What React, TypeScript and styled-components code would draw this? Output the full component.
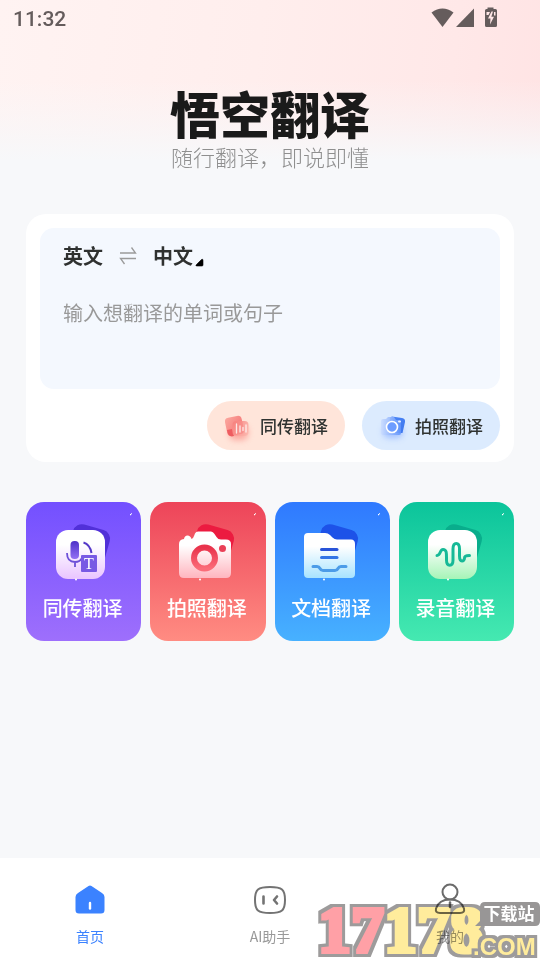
import React from "react";
import styled, { createGlobalStyle } from "styled-components";

const GlobalStyle = createGlobalStyle`
  *, *::before, *::after { box-sizing: border-box; }
  body { margin: 0; background: #f7f8fa; }
  body, button, textarea { font-family: "Noto Sans CJK SC", sans-serif; }
  button { border: 0; padding: 0; background: none; cursor: pointer; }
  svg { display: block; flex: none; overflow: visible; }
`;

const Page = styled.div`
  position: relative;
  min-height: 100vh;
  display: flex;
  flex-direction: column;
  background:
    linear-gradient(to bottom, rgba(247, 248, 250, 0) 0, rgba(247, 248, 250, 0) 80px, rgba(247, 248, 250, 0.5) 124px, #f7f8fa 160px),
    linear-gradient(97deg, #fff3f2 0%, #ffeeed 40%, #ffe8e8 70%, #ffdfe0 100%);
`;

const StatusBar = styled.header`
  display: flex;
  align-items: center;
  justify-content: space-between;
  height: 38px;
  padding: 0 41px 0 13px;
  color: #655c5c;
`;

const Clock = styled.time`
  font: 500 21px/24px Roboto, sans-serif;
`;

const Hero = styled.div`
  display: flex;
  flex-direction: column;
  align-items: center;
  padding-top: 48px;
`;

const Title = styled.h1`
  margin: 0;
  color: #1a1a1a;
  font-size: 50px;
  font-weight: 900;
  line-height: 52px;
`;

const Tagline = styled.p`
  margin: 4px 0 0;
  color: #8f8f8f;
  font-size: 22px;
  font-weight: 300;
  line-height: 28px;
`;

const Main = styled.main`
  flex: 1;
  padding: 44px 26px 24px;
`;

const Card = styled.section`
  padding: 14px 14px 12px;
  border-radius: 20px;
  background: #fff;
`;

const InputPanel = styled.div`
  padding: 14px 23px 12px;
  border-radius: 14px;
  background: #f4f8fe;
`;

const LanguageRow = styled.div`
  display: flex;
  align-items: center;
  height: 28px;
  gap: 16px;
`;

const Language = styled.button`
  display: flex;
  align-items: center;
  gap: 3px;
  color: #2f3130;
  font-size: 20px;
  font-weight: 700;
  line-height: 28px;
`;

const SourceText = styled.textarea`
  display: block;
  width: 100%;
  height: 78px;
  margin-top: 29px;
  padding: 0;
  border: 0;
  outline: 0;
  resize: none;
  background: none;
  color: #333;
  font-size: 20px;
  line-height: 28px;
  &::placeholder { color: #999; opacity: 1; }
`;

const Actions = styled.div`
  display: flex;
  justify-content: flex-end;
  gap: 17px;
  margin-top: 12px;
`;

const Pill = styled.button<{ $tint: string }>`
  display: flex;
  align-items: center;
  gap: 4px;
  height: 49px;
  padding: 0 17px 0 12px;
  border-radius: 25px;
  background: ${(p) => p.$tint};
  color: #303331;
  font-size: 17px;
  font-weight: 500;
`;

const Tiles = styled.nav`
  display: grid;
  grid-template-columns: repeat(4, 1fr);
  gap: 9px;
  margin-top: 40px;
`;

const Tile = styled.a<{ $from: string; $to: string }>`
  display: flex;
  flex-direction: column;
  align-items: center;
  gap: 12px;
  padding: 20px 2px 19px 0;
  border-radius: 18px;
  background: linear-gradient(${(p) => p.$from}, ${(p) => p.$to});
  color: #fff;
  font-size: 20px;
  font-weight: 500;
  line-height: 28px;
  text-decoration: none;
`;

const TabBar = styled.nav`
  display: grid;
  grid-template-columns: repeat(3, 1fr);
  height: 102px;
  padding-top: 26px;
  background: #fff;
`;

const Tab = styled.a<{ $active?: boolean }>`
  display: flex;
  flex-direction: column;
  align-items: center;
  gap: 10px;
  color: ${(p) => (p.$active ? "#3b82ff" : "#999")};
  font-size: 14px;
  line-height: 20px;
  text-decoration: none;
`;

const Watermark = styled.div`
  position: absolute;
  right: 0;
  bottom: 0;
  pointer-events: none;
  mix-blend-mode: multiply;
`;

const StatusIcons = () => (
  <svg width="68" height="20" viewBox="0 0 68 20" fill="currentColor" aria-hidden="true">
    <path d="M0.5 3.500Q11.5-4.500 22.5 3.500L11.5 18Z" />
    <path d="M43-.5V18H25Z" />
    <path fillRule="evenodd" d="M56.500 0V-1.500H62.500V0H64.500Q66 0 66 1.500V16.500Q66 18 64.500 18H55.500Q54 18 54 16.500V1.500Q54 0 55.500 0ZM60.500 2.500L57 9.500H59.500L59 15.500L63 7.800H60.300L62 2.500ZM55.500 3H59L57.500 6H55.500ZM63 3H64.500V6.500H63Z" />
  </svg>
);

const SwapIcon = () => (
  <svg width="18" height="18" viewBox="0 0 18 18" fill="none" stroke="#9a9a9a" strokeWidth="1.300" aria-hidden="true">
    <path d="M1 6H16.500L12.500 .5M17 11.500H1.500L5.500 17" />
  </svg>
);

const CornerMark = () => (
  <svg width="7" height="20" viewBox="0 0 7 20" aria-hidden="true">
    <path d="M7 14.500V19Q7 20 6 20H1Q-1 20 .5 18.500L5.500 13.500Q7 12.500 7 14.500Z" fill="#000" stroke="#000" strokeWidth=".6" />
  </svg>
);

const InterpretMini = () => (
  <svg width="37" height="38" viewBox="0 0 37 38" aria-hidden="true">
    <defs>
      <linearGradient id="mr" x1="0" y1="0" x2="1" y2="1"><stop stopColor="#fba9a0" /><stop offset="1" stopColor="#f46a6c" /></linearGradient>
      <linearGradient id="mrf" x1="0" y1="0" x2="1" y2="1"><stop stopColor="#f77f7c" /><stop offset="1" stopColor="#fbb0a8" stopOpacity=".5" /></linearGradient>
      <filter id="blurR" x="-50%" y="-50%" width="200%" height="200%"><feGaussianBlur stdDeviation="3" /></filter>
    </defs>
    <rect x="10" y="18" width="19" height="15" rx="6" fill="#f98780" opacity=".65" filter="url(#blurR)" />
    <rect x="7" y="9.500" width="17" height="18.500" rx="4" fill="url(#mr)" transform="rotate(-12 16 19)" />
    <path d="M8 23L13 22L15 29Q9 31 8 23Z" fill="#ee5c60" />
    <rect x="13.500" y="14" width="16" height="15" rx="4" fill="url(#mrf)" />
    <path d="M17.500 17V26M21 19V25M24 20.500V23.500M27 18V25" stroke="#fff" strokeOpacity=".8" strokeWidth="1.300" strokeLinecap="round" />
  </svg>
);

const CameraMini = () => (
  <svg width="37" height="38" viewBox="0 0 37 38" aria-hidden="true">
    <defs>
      <linearGradient id="mb" x1="0" y1="0" x2="1" y2="1"><stop stopColor="#4b86f7" /><stop offset="1" stopColor="#3e77ed" /></linearGradient>
      <linearGradient id="mc" x1="0" y1="0" x2="1" y2="0"><stop stopColor="#cadcff" /><stop offset="1" stopColor="#5f92fb" /></linearGradient>
      <filter id="blurB" x="-50%" y="-50%" width="200%" height="200%"><feGaussianBlur stdDeviation="3" /></filter>
    </defs>
    <rect x="9" y="18" width="20" height="13" rx="6" fill="#8fb2ff" opacity=".75" filter="url(#blurB)" />
    <path d="M16 10.500L18 9.500L28 11Q31.500 11.500 31 15L28.500 26H15Z" fill="url(#mb)" />
    <path d="M7 14Q7 12 9 12H12L14 10H20L22 13H25Q27 13 27 15V26Q27 28 25 28H9Q7 28 7 26Z" fill="url(#mc)" opacity=".9" />
    <circle cx="18" cy="20" r="5.500" fill="#6d9cff" stroke="#fff" strokeWidth="1.600" />
    <rect x="24" y="13.500" width="3" height="2" rx="1" fill="#e9f1ff" />
  </svg>
);

const Backdrop = ({ fill }: { fill: string }) => (
  <>
    <rect x="16" y="4.500" width="38" height="44" rx="9" fill={fill} transform="rotate(16 35 26)" />
    <path d="M77-7L78.500-8.500L77.500-7Z" stroke="#fff" strokeWidth="1" />
  </>
);

const Speck = () => <circle cx="23" cy="57.500" r="1" fill="#fff" />;

const InterpretIcon = () => (
  <svg width="60" height="60" viewBox="0 0 60 60" aria-hidden="true">
    <defs>
      <linearGradient id="pw" x1="0" y1="0" x2="0" y2="1"><stop offset=".3" stopColor="#fff" /><stop offset="1" stopColor="#e9c4ff" /></linearGradient>
      <linearGradient id="pm" x1="0" y1="0" x2="0" y2="1"><stop stopColor="#4d32c8" /><stop offset="1" stopColor="#9470f5" /></linearGradient>
    </defs>
    <Backdrop fill="#5130d8" />
    <rect x="3" y="8" width="49" height="49" rx="12" fill="url(#pw)" />
    <rect x="17.500" y="19" width="8.500" height="18" rx="4" fill="url(#pm)" />
    <path d="M14 31Q14 40 22 40Q27 40 29 36M22 40V45" fill="none" stroke="#6d50d8" strokeWidth="1.800" />
    <path d="M30.500 20.500Q37 22.500 38.500 31" fill="none" stroke="#5539c8" strokeWidth="2" />
    <rect x="28" y="33" width="16" height="17" rx="1" fill="#7859e4" />
    <text x="36" y="47" textAnchor="middle" fill="#fff" fontFamily="Liberation Serif, serif" fontSize="16" fontWeight="400">T</text>
    <Speck />
  </svg>
);

const CameraIcon = () => (
  <svg width="60" height="60" viewBox="0 0 60 60" aria-hidden="true">
    <defs>
      <linearGradient id="rw" x1="0" y1="0" x2="0" y2="1"><stop offset=".3" stopColor="#fff" /><stop offset="1" stopColor="#ffb5bf" /></linearGradient>
      <linearGradient id="rl" x1="0" y1="0" x2="0" y2="1"><stop stopColor="#e9334c" /><stop offset="1" stopColor="#fb6b78" /></linearGradient>
    </defs>
    <Backdrop fill="#ec1b40" />
    <path d="M2 22Q2 17.500 7 17Q7.500 13.500 10.500 13.500T14.500 17Q16 17 17 14L18 11.500Q19 9.500 21 9.500H34Q36 9.500 37.500 12L39.500 15Q41 17.500 44 17.500H49Q54 17.500 54 22V51Q54 56 49 56H7Q2 56 2 51Z" fill="url(#rw)" />
    <circle cx="27.500" cy="36" r="10.500" fill="none" stroke="url(#rl)" strokeWidth="6" />
    <circle cx="45.500" cy="26.500" r="3.500" fill="#ea4057" />
    <Speck />
  </svg>
);

const FolderIcon = () => (
  <svg width="60" height="60" viewBox="0 0 60 60" aria-hidden="true">
    <defs>
      <linearGradient id="bw" x1="0" y1="0" x2="0" y2="1"><stop offset=".3" stopColor="#fff" /><stop offset="1" stopColor="#a7e3ff" /></linearGradient>
    </defs>
    <Backdrop fill="#1d52e8" />
    <path d="M3 15Q3 11 7 11H24Q27 11 29 13L31.500 15.500Q33.500 17.500 36 17.500H50Q54 17.500 54 22V52Q54 56 50 56H7Q3 56 3 52Z" fill="url(#bw)" />
    <g fill="none" strokeWidth="3" strokeLinecap="round" strokeLinejoin="round">
      <path d="M20.500 27.500H36" stroke="#2853d8" />
      <path d="M20.500 35.500H36" stroke="#3275e6" />
      <path d="M12 44.500H16Q18 44.500 19 46.500Q20 48.500 22 48.500H34Q36 48.500 37 46.500Q38 44.500 40 44.500H45" stroke="#4c9ce8" />
    </g>
    <Speck />
  </svg>
);

const WaveIcon = () => (
  <svg width="60" height="60" viewBox="0 0 60 60" aria-hidden="true">
    <defs>
      <linearGradient id="gw" x1="0" y1="0" x2="0" y2="1"><stop offset=".3" stopColor="#fff" /><stop offset="1" stopColor="#a6f4b7" /></linearGradient>
    </defs>
    <Backdrop fill="#09ad8c" />
    <rect x="3" y="8" width="49" height="49" rx="12" fill="url(#gw)" />
    <path d="M12 33.500C16 33.500 14.500 27.500 18 27.500C22 27.500 21.500 32 21.500 38C21.500 45 28 45 28 38V27C28 19.500 34.500 19.500 34.500 27V34C34.500 41 39.500 39.500 39.500 36Q39.500 33.500 44.500 33.500" fill="none" stroke="#16b997" strokeWidth="3" strokeLinecap="round" />
    <Speck />
  </svg>
);

const HomeIcon = () => (
  <svg width="32" height="32" viewBox="0 0 32 32" aria-hidden="true">
    <path d="M14.500 2Q16 1 17.500 2L28 9Q30.500 10.500 30.500 13V26Q30.500 29.500 27 29.500H5Q1.500 29.500 1.500 26V13Q1.500 10.500 4 9Z" fill="#3b82ff" />
    <path d="M16 19V24.500" stroke="#fff" strokeWidth="2.400" strokeLinecap="round" />
  </svg>
);

const AssistantIcon = () => (
  <svg width="32" height="32" viewBox="0 0 32 32" fill="none" stroke="#737373" strokeWidth="2" aria-hidden="true">
    <path d="M16 3Q25 3 28 5.500Q31 8 31 16T28 26.500Q25 29 16 29T4 26.500Q1 24 1 16T4 5.500Q7 3 16 3Z" />
    <path d="M9.500 12.500V19.500M23 12.500L20 16L23 19.500" strokeWidth="2.600" strokeLinecap="round" strokeLinejoin="round" />
  </svg>
);

const ProfileIcon = () => (
  <svg width="32" height="32" viewBox="0 0 32 32" fill="none" stroke="#6b6b6b" strokeWidth="2" aria-hidden="true">
    <circle cx="16" cy="8" r="7.500" />
    <path d="M6 29Q1 29 2 24.500Q5 15.500 16 15.500T30 24.500Q31 29 26 29Z" />
    <path d="M16 18.500V23" strokeWidth="2.500" strokeLinecap="round" />
  </svg>
);

const SiteMark = () => (
  <svg width="224" height="64" viewBox="0 0 224 64" fontWeight="700" role="img" aria-label="17178.com 下载站">
    <defs>
      <filter id="edgeL" x="-10%" y="-20%" width="120%" height="140%" colorInterpolationFilters="sRGB">
        <feMorphology in="SourceAlpha" operator="dilate" radius="5" result="wide" />
        <feFlood floodColor="#9d9b9b" />
        <feComposite in2="wide" operator="in" result="edge" />
        <feMorphology in="SourceGraphic" operator="dilate" radius="2" result="face" />
        <feMerge><feMergeNode in="edge" /><feMergeNode in="face" /></feMerge>
      </filter>
      <filter id="edgeS" x="-10%" y="-30%" width="120%" height="160%" colorInterpolationFilters="sRGB">
        <feMorphology in="SourceAlpha" operator="dilate" radius="3" result="wide" />
        <feFlood floodColor="#9d9b9b" />
        <feComposite in2="wide" operator="in" result="edge" />
        <feMerge><feMergeNode in="edge" /><feMergeNode in="SourceGraphic" /></feMerge>
      </filter>
    </defs>
    <text x="2" y="56" fontFamily="Liberation Serif, serif" fontSize="66" fill="#ffa0a6" filter="url(#edgeL)">
      17<tspan fill="#ffec9c">178</tspan>
    </text>
    <text x="157" y="59" fontFamily="Liberation Sans, sans-serif" fontSize="24" fill="#ffec9c" filter="url(#edgeS)">.COM</text>
    <path d="M169 6H219Q224 6 224 11V25Q224 30 219 30H159L164 25V11Q164 6 169 6Z" fill="#989696" />
    <text x="193" y="24" textAnchor="middle" fill="#fff" fontFamily="Noto Sans CJK SC, sans-serif" fontSize="17">下载站</text>
  </svg>
);

const tiles = [
  { label: "同传翻译", from: "#7350ff", to: "#9e6ffc", Icon: InterpretIcon },
  { label: "拍照翻译", from: "#ed4459", to: "#ff8c82", Icon: CameraIcon },
  { label: "文档翻译", from: "#2f79ff", to: "#47b1ff", Icon: FolderIcon },
  { label: "录音翻译", from: "#0bc49b", to: "#45e9b1", Icon: WaveIcon },
];

export default function App() {
  return (
    <Page>
      <GlobalStyle />
      <StatusBar>
        <Clock>11:32</Clock>
        <StatusIcons />
      </StatusBar>
      <Hero>
        <Title>悟空翻译</Title>
        <Tagline>随行翻译，即说即懂</Tagline>
      </Hero>
      <Main>
        <Card>
          <InputPanel>
            <LanguageRow>
              <Language type="button">英文</Language>
              <SwapIcon />
              <Language type="button">中文<CornerMark /></Language>
            </LanguageRow>
            <SourceText aria-label="输入想翻译的单词或句子" placeholder="输入想翻译的单词或句子" />
          </InputPanel>
          <Actions>
            <Pill type="button" $tint="#ffe5da"><InterpretMini />同传翻译</Pill>
            <Pill type="button" $tint="#dcebfe"><CameraMini />拍照翻译</Pill>
          </Actions>
        </Card>
        <Tiles>
          {tiles.map(({ label, from, to, Icon }) => (
            <Tile key={label} href="#" $from={from} $to={to}>
              <Icon />
              {label}
            </Tile>
          ))}
        </Tiles>
      </Main>
      <TabBar>
        <Tab href="#" $active aria-current="page"><HomeIcon />首页</Tab>
        <Tab href="#"><AssistantIcon />AI助手</Tab>
        <Tab href="#"><ProfileIcon />我的</Tab>
      </TabBar>
      <Watermark><SiteMark /></Watermark>
    </Page>
  );
}
